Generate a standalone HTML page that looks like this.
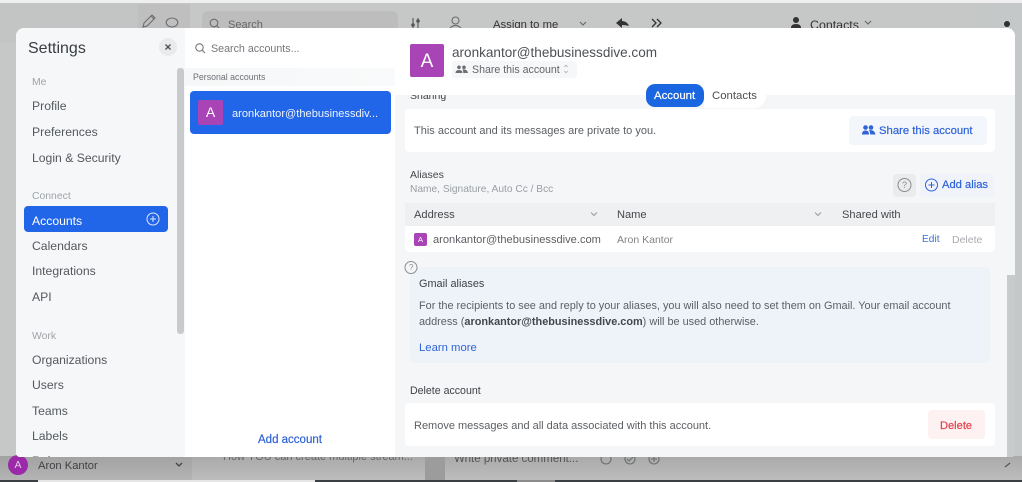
<!DOCTYPE html>
<html>
<head>
<meta charset="utf-8">
<style>
html,body{margin:0;padding:0}
body{width:1022px;height:482px;overflow:hidden;position:relative;background:#c6c7c7;font-family:"Liberation Sans",sans-serif;color:#4a4d52}
.b{position:absolute}
.t{position:absolute;white-space:nowrap;line-height:16px;height:16px;margin-top:1px}
.m{-webkit-text-stroke:.2px currentColor}
.n{font-size:12.2px;left:32px;color:#55585d}
.h{font-size:10.4px;left:32px;color:#a0a3a7}
svg{position:absolute;overflow:visible}
</style>
</head>
<body>
<!-- backdrop -->
<div class="b" style="left:0;top:0;width:1022px;height:3px;background:#efefef"></div>
<div class="b" style="left:0;top:3px;width:190px;height:40px;background:#c3c5c5"></div>
<div class="b" style="left:138px;top:4px;width:52px;height:30px;background:#bfbfbf"></div>
<div class="b" style="left:202px;top:11px;width:196px;height:24px;background:#bdbdbd;border-radius:6px"></div>
<div class="b" style="left:985px;top:3px;width:37px;height:479px;background:#c5c8c8"></div>
<div class="b" style="left:0;top:456px;width:1022px;height:24px;background:linear-gradient(#a9a9a9,#bdbdbd)"></div>
<div class="b" style="left:0;top:456px;width:192px;height:24px;background:linear-gradient(#a2a2a2,#b4b4b4)"></div>
<div class="b" style="left:425px;top:456px;width:20px;height:24px;background:#9c9c9c"></div>
<div class="b" style="left:0;top:480px;width:1022px;height:2px;background:#3a3f44"></div>
<div class="b" style="left:38px;top:480px;width:277px;height:2px;background:#e6e6e6"></div>
<div class="b" style="left:517px;top:480px;width:38px;height:2px;background:#8b8b8b"></div>

<svg style="left:0;top:0" width="1022" height="482" fill="none" stroke="#6b6d6f" stroke-width="1.1">
  <path d="M143 27l1-4 8-8 3 3-8 8zM151 16l3 3"/>
  <ellipse cx="172" cy="22.500" rx="5.800" ry="4.500"/>
  <circle cx="214" cy="23" r="3.800"/><path d="M217 26l3 3"/>
  <path d="M413 18v10M418 18v10" stroke="#555"/><circle cx="413" cy="25" r="1.800" fill="#555" stroke="none"/><circle cx="418" cy="21" r="1.800" fill="#555" stroke="none"/>
  <circle cx="455.500" cy="20.500" r="3.500"/><path d="M450 28q5.500-5 11 0"/>
  <path d="M580 22l3 3 3-3M865 21l3 3 3-3" stroke="#666"/>
  <path d="M629 26q-2-5-7-5v-3l-6 5 6 5v-3q4 0 7 1z" fill="#333" stroke="none"/>
  <path d="M652 19l4 4-4 4M657 19l4 4-4 4" stroke="#333" stroke-width="1.300"/>
  <circle cx="796" cy="20" r="3" fill="#333" stroke="none"/><path d="M791 28q0-4 5-4t5 4z" fill="#333" stroke="none"/>
  <circle cx="1007" cy="24" r="3" fill="#2d2f31" stroke="none"/>
  <circle cx="606" cy="459" r="5"/><circle cx="630" cy="459" r="5"/><circle cx="654" cy="459" r="5"/><path d="M651 459h6M654 456v6M627 459l2 2 4-4"/>
  <path d="M176 463l3 3 3-3" stroke="#444" stroke-width="1.300"/>
  <path d="M1005 467l5-4" stroke="#444"/>
</svg>
<div class="t" style="left:228px;top:16px;font-size:11px;color:#666">Search</div>
<div class="t" style="left:493px;top:16px;font-size:11.300px;color:#333">Assign to me</div>
<div class="t" style="left:810px;top:16px;font-size:12.400px;color:#333">Contacts</div>
<div class="t" style="left:223px;top:448px;font-size:11px;color:#666">How YOU can create multiple stream...</div>
<div class="t" style="left:454px;top:450px;font-size:11.500px;color:#555">Write private comment...</div>
<div class="b" style="left:8px;top:455px;width:20px;height:20px;border-radius:50%;background:#9a2aa8;color:#e9c8ee;font-size:10.500px;line-height:20px;text-align:center">A</div>
<div class="t" style="left:38px;top:457px;font-size:11.200px;color:#3f4144">Aron Kantor</div>

<!-- modal -->
<div class="b" style="left:16px;top:28px;width:999px;height:429px;border-radius:8px 8px 4px 4px;overflow:hidden;background:#f4f6f8">
  <div style="position:relative;left:-16px;top:-28px;width:1022px;height:482px">
    <!-- sidebar -->
    <div class="b" style="left:16px;top:28px;width:169px;height:430px;background:#f5f7f9"></div>
    <div class="t" style="left:28px;top:40px;font-size:16px;color:#3a3d42">Settings</div>
    <div class="b" style="left:159px;top:38px;width:18px;height:18px;border-radius:50%;background:#e8eaec"></div>
    <svg style="left:0;top:0" width="200" height="60" fill="none" stroke="#4b4e52" stroke-width="1.300"><path d="M165.500 44.500l5 5M170.500 44.500l-5 5"/></svg>
    <div class="b" style="left:177px;top:68px;width:7px;height:266px;border-radius:3px;background:#c9cacc"></div>
    <div class="t h" style="top:74px">Me</div>
    <div class="t n" style="top:97px">Profile</div>
    <div class="t n" style="top:123px">Preferences</div>
    <div class="t n" style="top:149px">Login &amp; Security</div>
    <div class="t h" style="top:188px">Connect</div>
    <div class="b" style="left:24px;top:206px;width:144px;height:26px;border-radius:4px;background:#2166e8"></div>
    <div class="t n" style="top:212px;color:#fff">Accounts</div>
    <svg style="left:0;top:0" width="200" height="240" fill="none" stroke="#dfe9fb" stroke-width="1"><circle cx="153" cy="219" r="6"/><path d="M150 219h6M153 216v6"/></svg>
    <div class="t n" style="top:237px">Calendars</div>
    <div class="t n" style="top:262px">Integrations</div>
    <div class="t n" style="top:288px">API</div>
    <div class="t h" style="top:328px">Work</div>
    <div class="t n" style="top:351px">Organizations</div>
    <div class="t n" style="top:376px">Users</div>
    <div class="t n" style="top:402px">Teams</div>
    <div class="t n" style="top:427px">Labels</div>
    <div class="t n" style="top:452px">Rules</div>

    <!-- middle -->
    <div class="b" style="left:185px;top:28px;width:210px;height:430px;background:#fff"></div>
    <div class="b" style="left:185px;top:68px;width:210px;height:18px;background:linear-gradient(90deg,#f5f7f8,#f9fafb)"></div>
    <svg style="left:0;top:0" width="220" height="60" fill="none" stroke="#777" stroke-width="1.100"><circle cx="199.500" cy="47.500" r="3.700"/><path d="M202.300 50.300l2.700 2.700"/></svg>
    <div class="t" style="left:211px;top:40px;font-size:10.700px;color:#74777b">Search accounts...</div>
    <div class="t" style="left:193px;top:68px;font-size:8.800px;color:#6d7074">Personal accounts</div>
    <div class="b" style="left:190px;top:91px;width:201px;height:43px;border-radius:4px;background:#2166e8"></div>
    <div class="b" style="left:198px;top:100px;width:25px;height:25px;border-radius:2px;background:#a844b5;color:#fff;font-size:14px;line-height:25px;text-align:center">A</div>
    <div class="t" style="left:232px;top:105px;font-size:11.100px;color:#eef3fd">aronkantor@thebusinessdiv...</div>
    <div class="t m" style="left:258px;top:431px;font-size:11.500px;color:#2f63d8">Add account</div>

    <!-- right content -->
    <div class="t" style="left:410px;top:87px;font-size:10.500px;color:#3f4246">Sharing</div>
    <div class="b" style="left:395px;top:28px;width:620px;height:67px;background:#fff"></div>
    <div class="b" style="left:410px;top:44px;width:34px;height:33px;border-radius:2px;background:#a844b5;color:#fff;font-size:19px;line-height:35px;text-align:center">A</div>
    <div class="t" style="left:452px;top:44px;font-size:13.550px;color:#4d5054">aronkantor@thebusinessdive.com</div>
    <div class="b" style="left:452px;top:61px;width:125px;height:17px;border-radius:3px;background:#f6f7f8"></div>
    <svg style="left:0;top:0" width="600" height="90">
      <g fill="#6b6e72"><circle cx="459" cy="67.300" r="1.800"/><circle cx="464" cy="67.300" r="1.800"/><path d="M455.500 73q0-3 3.500-3t3.500 3zM463.300 73q0-3-1.200-3.500 4.900-1 5.900 3.500z"/></g>
      <path d="M566 67l1.600-1.800 1.600 1.800M566 71l1.600 1.800 1.600-1.800" fill="none" stroke="#aaa" stroke-width=".8" transform="translate(-1.600 0)"/>
    </svg>
    <div class="t" style="left:472px;top:61px;font-size:10.600px;color:#63666a">Share this account</div>

    <div class="b" style="left:704px;top:84px;width:62px;height:24px;border-radius:0 0 12px 0;background:#fff"></div>
    <div class="b" style="left:646px;top:84px;width:58px;height:23px;border-radius:9px;background:#1a66e0"></div>
    <div class="t m" style="left:654px;top:87px;font-size:11.400px;color:#fff">Account</div>
    <div class="t" style="left:712px;top:87px;font-size:11.400px;color:#4d5054">Contacts</div>

    <div class="b" style="left:405px;top:109px;width:590px;height:43px;border-radius:4px;background:#fff"></div>
    <div class="t" style="left:414px;top:122px;font-size:11px;color:#5c5f63">This account and its messages are private to you.</div>
    <div class="b" style="left:849px;top:116px;width:138px;height:29px;border-radius:4px;background:#f3f6fb"></div>
    <svg style="left:0;top:0" width="900" height="140">
      <g fill="#2f63d8"><circle cx="865.500" cy="127.500" r="2.300"/><circle cx="871" cy="127.500" r="2.300"/><path d="M862 134.500q0-4 3.500-4t3.500 4zM870.200 134.500q0-3-1.600-4.200 5.900-1.200 6.900 4.200z"/></g>
    </svg>
    <div class="t m" style="left:879px;top:122px;font-size:11.300px;color:#2f63d8">Share this account</div>

    <div class="t" style="left:410px;top:166px;font-size:10.500px;color:#44474b">Aliases</div>
    <div class="t" style="left:410px;top:181px;font-size:10.200px;color:#9b9ea2">Name, Signature, Auto Cc / Bcc</div>
    <div class="b" style="left:893px;top:174px;width:23px;height:23px;border-radius:4px;background:#e9ebed"></div>
    <div class="b" style="left:920px;top:174px;width:74px;height:23px;border-radius:4px;background:#f0f4fa"></div>
    <svg style="left:0;top:0" width="960" height="200" fill="none"><circle cx="904.500" cy="185" r="6.500" stroke="#8b8d90"/><circle cx="931.500" cy="185" r="6" stroke="#2f63d8"/><path d="M928.500 185h6M931.500 182v6" stroke="#2f63d8"/></svg>
    <div class="t" style="left:902px;top:176px;font-size:9px;color:#8b8d90">?</div>
    <div class="t m" style="left:942px;top:176px;font-size:11.200px;color:#2f63d8">Add alias</div>

    <div class="b" style="left:405px;top:203px;width:590px;height:23px;background:#eef0f2"></div>
    <div class="t" style="left:414px;top:206px;font-size:11.100px;color:#45484c">Address</div>
    <div class="t" style="left:617px;top:206px;font-size:11.100px;color:#45484c">Name</div>
    <div class="t" style="left:842px;top:206px;font-size:11.100px;color:#45484c">Shared with</div>
    <svg style="left:0;top:0" width="840" height="230" fill="none" stroke="#999"><path d="M591 212.500l3 3 3-3M815 212.500l3 3 3-3"/></svg>

    <div class="b" style="left:405px;top:226px;width:590px;height:26px;border-radius:0 0 4px 4px;background:#fff"></div>
    <div class="b" style="left:414px;top:233px;width:13px;height:13px;border-radius:2px;background:#a844b5;color:#fff;font-size:7.500px;line-height:13px;text-align:center">A</div>
    <div class="t" style="left:433px;top:231px;font-size:11.100px;color:#5c5f63">aronkantor@thebusinessdive.com</div>
    <div class="t" style="left:617px;top:231px;font-size:10.500px;color:#808387">Aron Kantor</div>
    <div class="t" style="left:922px;top:231px;font-size:10.200px;color:#3c72d8">Edit</div>
    <div class="t" style="left:952px;top:231px;font-size:10.500px;color:#a9acaf">Delete</div>

    <div class="b" style="left:410px;top:267px;width:580px;height:96px;border-radius:5px;background:#eef3fa"></div>
    <svg style="left:0;top:0" width="430" height="280" fill="none"><circle cx="411" cy="267.500" r="6" stroke="#8b8d90" fill="#f4f6f8"/></svg>
    <div class="t" style="left:409px;top:259px;font-size:8px;color:#8b8d90">?</div>
    <div class="t" style="left:419px;top:275px;font-size:10.900px;color:#3f4246">Gmail aliases</div>
    <div class="t" style="left:419px;top:297px;font-size:10.900px;color:#5c5f63">For the recipients to see and reply to your aliases, you will also need to set them on Gmail. Your email account</div>
    <div class="t" style="left:419px;top:313px;font-size:10.900px;color:#5c5f63">address (<b style="color:#44474b">aronkantor@thebusinessdive.com</b>) will be used otherwise.</div>
    <div class="t" style="left:419px;top:339px;font-size:11.300px;color:#2f63d8">Learn more</div>

    <div class="t" style="left:410px;top:382px;font-size:10.600px;color:#3f4246">Delete account</div>
    <div class="b" style="left:405px;top:403px;width:590px;height:43px;border-radius:4px;background:#fff"></div>
    <div class="t" style="left:414px;top:417px;font-size:11px;color:#5c5f63">Remove messages and all data associated with this account.</div>
    <div class="b" style="left:928px;top:410px;width:57px;height:29px;border-radius:4px;background:#fdf1f1"></div>
    <div class="t m" style="left:940px;top:417px;font-size:11.100px;color:#e2434b">Delete</div>

    <div class="b" style="left:1007px;top:275px;width:8px;height:183px;background:#c9cacc"></div>
  </div>
</div>
</body>
</html>
